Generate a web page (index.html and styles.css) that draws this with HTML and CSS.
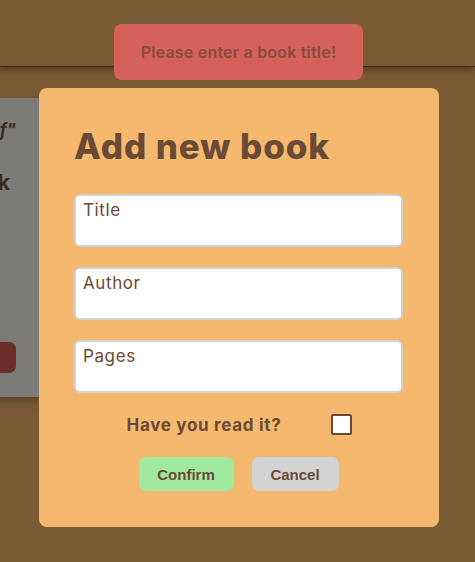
FILE: index.html
```html
<!DOCTYPE html>
<html lang="en">
<head>
<meta charset="utf-8">
<title>Library</title>
<link rel="stylesheet" href="styles.css">
</head>
<body>
<header class="topbar"></header>
<main class="shelf">
  <article class="book-card">
    <p class="book-title">"The Picture of Dorian Gray of"</p>
    <p class="book-author">by Oscar Wilde book</p>
    <button class="remove-btn" type="button" aria-label="Remove"></button>
  </article>
</main>

<div class="toast">Please enter a book title!</div>

<form class="modal">
  <h1 class="modal-title">Add new book</h1>
  <input class="field" type="text" placeholder="Title">
  <input class="field" type="text" placeholder="Author">
  <input class="field" type="text" placeholder="Pages">
  <label class="read-row">
    <span>Have you read it?</span>
    <span class="checkbox"></span>
  </label>
  <div class="actions">
    <button class="btn btn-confirm" type="button">Confirm</button>
    <button class="btn btn-cancel" type="button">Cancel</button>
  </div>
</form>
</body>
</html>
```
FILE: styles.css
```css
* { box-sizing: border-box; }
html, body { margin: 0; padding: 0; }
body {
  background: #7a5b36;
  font-family: "Inter", "Noto Sans", sans-serif;
  color: #6b4a35;
  width: 475px;
  height: 562px;
  overflow: hidden;
  position: relative;
}
.topbar {
  height: 67px;
  background: #7a5b36;
  border-bottom: 1px solid #3e2a17;
  box-shadow: 0 3px 6px rgba(40, 25, 10, 0.45);
}
.shelf {
  display: flex;
  padding-top: 31px;
}
.book-card {
  width: 240px;
  height: 299px;
  margin-left: -200px;
  background: #7d7b78;
  padding: 20px 24px 20px 20px;
  box-shadow: 0 4px 8px rgba(40, 25, 10, 0.4);
  display: flex;
  flex-direction: column;
  align-items: flex-end;
  text-align: right;
}
.book-title {
  margin: 2px 0 0;
  font-weight: 700;
  font-style: italic;
  font-size: 17px;
  color: #3b2a20;
  white-space: nowrap;
}
.book-author {
  margin: 30px 6px 0 0;
  font-weight: 700;
  font-size: 21px;
  color: #3b2a20;
  white-space: nowrap;
}
.remove-btn {
  margin-top: auto;
  margin-bottom: 4px;
  width: 120px;
  height: 31px;
  border: none;
  border-radius: 7px;
  background: #6b2d2a;
  margin-right: 0;
}
.toast {
  position: absolute;
  top: 24px;
  left: 114px;
  width: 249px;
  height: 56px;
  background: #d4615a;
  border-radius: 8px;
  display: flex;
  align-items: center;
  justify-content: center;
  font-weight: 600;
  font-size: 16px;
  letter-spacing: 0.2px;
  color: #8a4c3b;
  z-index: 3;
}
.modal {
  position: absolute;
  top: 88px;
  left: 39px;
  width: 400px;
  height: 439px;
  background: #f4b96e;
  border-radius: 8px;
  padding: 36px 36px 36px 35px;
  display: flex;
  flex-direction: column;
  z-index: 2;
}
.modal-title {
  margin: 0 0 26px;
  font-size: 35px;
  line-height: 44px;
  font-weight: 800;
  letter-spacing: 0.9px;
  color: #6b4a35;
  padding-left: 0;
}
.field {
  width: 329px;
  height: 53px;
  margin: 0 0 20px;
  border: 2px solid #d2d2d2;
  border-radius: 6px;
  background: #fff;
  padding: 0 7px 22px;
  font-family: "Inter", "Noto Sans", sans-serif;
  font-size: 17px;
  letter-spacing: 0.6px;
  font-weight: 400;
  color: #6b4a35;
}
.field::placeholder { color: #6b4a35; opacity: 1; }
.read-row {
  margin-top: 1px;
  display: flex;
  align-items: center;
  justify-content: center;
  gap: 50px;
  font-weight: 700;
  font-size: 17px;
  letter-spacing: 0.7px;
  color: #6b4a35;
  padding-left: 2px;
}
.checkbox {
  width: 21px;
  height: 21px;
  border: 2px solid #6b4a35;
  border-radius: 2px;
  background: #fff;
}
.actions {
  margin-top: 22px;
  display: flex;
  justify-content: center;
  gap: 18px;
}
.btn {
  height: 34px;
  border: none;
  border-radius: 7px;
  font-family: "Liberation Sans", Arial, sans-serif;
  font-weight: 700;
  font-size: 15px;
  color: #6b4a35;
  padding: 0 18px;
}
.btn-confirm { background: #a1e99e; width: 95px; }
.btn-cancel { background: #d3d3d3; width: 87px; }
```
